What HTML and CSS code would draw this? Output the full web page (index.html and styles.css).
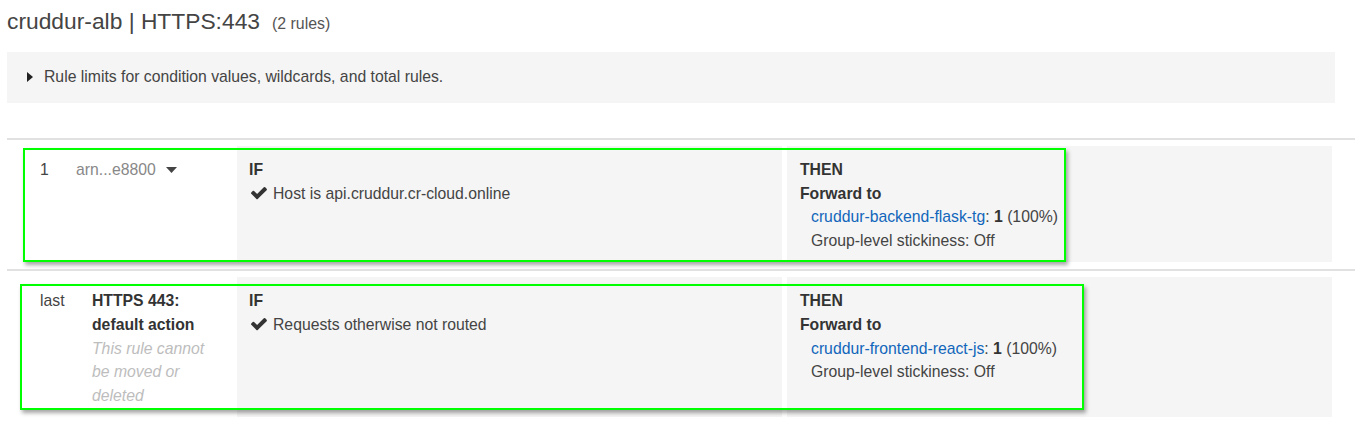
FILE: index.html
```html
<!DOCTYPE html>
<html>
<head>
<meta charset="utf-8">
<link rel="stylesheet" href="styles.css">
</head>
<body>
<div class="page">
  <h1 class="title">cruddur-alb | HTTPS:443<span class="count">(2 rules)</span></h1>
  <div class="info">
    <svg class="tri-right" width="6" height="10" viewBox="0 0 6 10"><polygon points="0,0 6,5 0,10" fill="#222"/></svg>
    <span>Rule limits for condition values, wildcards, and total rules.</span>
  </div>

  <div class="rules">
    <div class="rule">
      <div class="rule-body">
        <div class="cell num">1</div>
        <div class="cell name">
          <span class="arn">arn...e8800</span>
          <svg class="caret" width="11" height="6" viewBox="0 0 11 6"><polygon points="0,0 11,0 5.5,6" fill="#444"/></svg>
        </div>
        <div class="cell cond">
          <div class="head">IF</div>
          <div class="check-line">
            <svg class="check" width="16" height="13" viewBox="120 390 1560 1140"><path fill="#333" d="M1671 566q0 40-28 68l-724 724-136 136q-28 28-68 28t-68-28l-136-136-362-362q-28-28-28-68t28-68l136-136q28-28 68-28t68 28l294 295 656-657q28-28 68-28t68 28l136 136q28 28 28 68z"/></svg>
            <span>Host is api.cruddur.cr-cloud.online</span>
          </div>
        </div>
        <div class="cell action">
          <div class="head">THEN</div>
          <div class="head">Forward to</div>
          <div class="sub"><a class="link">cruddur-backend-flask-tg</a>: <b>1</b> (100%)</div>
          <div class="sub">Group-level stickiness: Off</div>
        </div>
      </div>
      <div class="highlight hl-1"></div>
    </div>

    <div class="rule">
      <div class="rule-body">
        <div class="cell num">last</div>
        <div class="cell name name-default">
          <div class="head">HTTPS 443: default action</div>
          <div class="note">This rule cannot be moved or deleted</div>
        </div>
        <div class="cell cond">
          <div class="head">IF</div>
          <div class="check-line">
            <svg class="check" width="16" height="13" viewBox="120 390 1560 1140"><path fill="#333" d="M1671 566q0 40-28 68l-724 724-136 136q-28 28-68 28t-68-28l-136-136-362-362q-28-28-28-68t28-68l136-136q28-28 68-28t68 28l294 295 656-657q28-28 68-28t68 28l136 136q28 28 28 68z"/></svg>
            <span>Requests otherwise not routed</span>
          </div>
        </div>
        <div class="cell action">
          <div class="head">THEN</div>
          <div class="head">Forward to</div>
          <div class="sub"><a class="link">cruddur-frontend-react-js</a>: <b>1</b> (100%)</div>
          <div class="sub">Group-level stickiness: Off</div>
        </div>
      </div>
      <div class="highlight hl-2"></div>
    </div>
  </div>
</div>
</body>
</html>
```

FILE: styles.css
```css
* { box-sizing: border-box; }
html, body { margin: 0; padding: 0; background: #fff; }
body {
  font-family: "Liberation Sans", Arial, sans-serif;
  font-size: 15.75px;
  color: #444;
  overflow: hidden;
}
.page { padding: 8px 0 0 7px; }

.title {
  margin: 0;
  font-weight: normal;
  font-size: 22.8px;
  line-height: 27px;
  color: #444;
}
.count {
  font-size: 15.9px;
  margin-left: 12px;
  color: #555;
}

.info {
  margin-top: 15px;
  width: 1328px;
  height: 51px;
  background: #f5f5f5;
  display: flex;
  align-items: center;
  padding-left: 20px;
  padding-bottom: 2px;
}
.tri-right { margin-right: 11px; flex: none; }

.rules { margin-top: 35px; }
.rule {
  position: relative;
  border-top: 2px solid #e1e1e1;
  padding: 6px 0 7px;
}
.rule-body { display: flex; align-items: stretch; line-height: 23.6px; }
.cell { padding-top: 12px; padding-bottom: 10px; }
.num { width: 69px; padding-left: 33px; }
.name { width: 161px; display: flex; align-items: flex-start; }
.arn { color: #888; }
.caret { margin-left: 10px; margin-top: 9px; }
.name-default { display: block; padding-left: 16px; padding-right: 20px; }
.note { font-style: italic; color: #bdbdbd; }

.cond {
  width: 545px;
  background: #f5f5f5;
  padding-left: 12px;
}
.action {
  width: 545px;
  margin-left: 5px;
  background: #f5f5f5;
  padding-left: 13px;
}
.head { font-weight: bold; color: #333; }
.check-line { display: flex; align-items: center; }
.check { margin: 0 6px 0 2px; flex: none; }
.sub { padding-left: 11px; }
.sub b { color: #333; }
.link { color: #1166bb; text-decoration: none; }

.highlight {
  position: absolute;
  border: 2px solid #00ff00;
  box-shadow: 2px 3px 4px rgba(0, 0, 0, 0.35);
  pointer-events: none;
}
.hl-1 { left: 16px; top: 8px; width: 1043px; height: 114px; }
.hl-2 { left: 13px; top: 13px; width: 1064px; height: 126px; }
```
